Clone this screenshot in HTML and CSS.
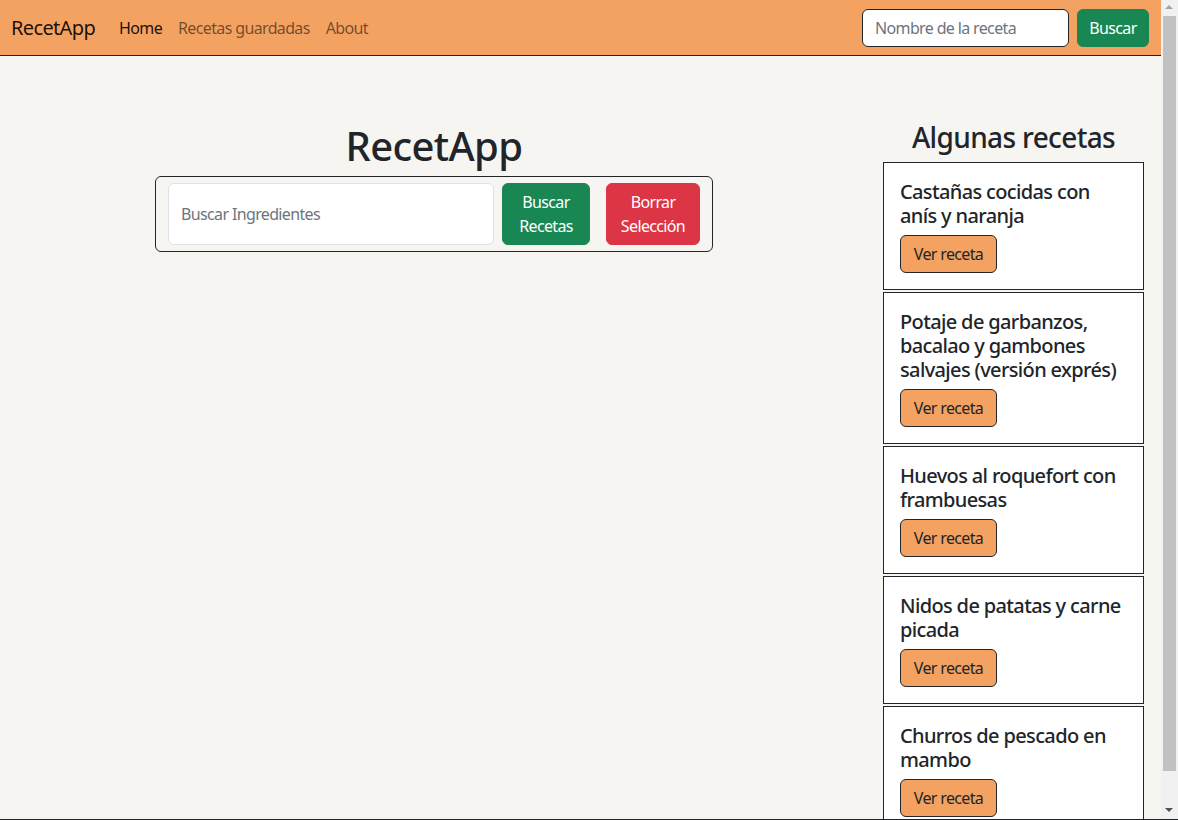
FILE: index.html
```html
<!DOCTYPE html>
<html lang="es">
<head>
<meta charset="utf-8">
<title>RecetApp</title>
<link rel="stylesheet" href="styles.css">
</head>
<body>
<nav class="navbar">
  <div class="nav-left">
    <a class="brand" href="#">RecetApp</a>
    <ul class="nav-links">
      <li><a class="nav-link active" href="#">Home</a></li>
      <li><a class="nav-link" href="#">Recetas guardadas</a></li>
      <li><a class="nav-link" href="#">About</a></li>
    </ul>
  </div>
  <form class="nav-search">
    <input class="nav-input" type="text" placeholder="Nombre de la receta">
    <button class="btn btn-green nav-btn" type="button">Buscar</button>
  </form>
</nav>

<main class="layout">
  <section class="main-col">
    <h1 class="title">RecetApp</h1>
    <div class="search-card">
      <input class="ing-input" type="text" placeholder="Buscar Ingredientes">
      <button class="btn btn-green btn-search" type="button">Buscar Recetas</button>
      <button class="btn btn-red btn-clear" type="button">Borrar Selección</button>
    </div>
  </section>

  <aside class="side-col">
    <h3 class="side-title">Algunas recetas</h3>
    <div class="recipe-card">
      <h5 class="recipe-name">Castañas cocidas con anís y naranja</h5>
      <button class="btn btn-orange" type="button">Ver receta</button>
    </div>
    <div class="recipe-card">
      <h5 class="recipe-name">Potaje de garbanzos, bacalao y gambones salvajes (versión exprés)</h5>
      <button class="btn btn-orange" type="button">Ver receta</button>
    </div>
    <div class="recipe-card">
      <h5 class="recipe-name">Huevos al roquefort con frambuesas</h5>
      <button class="btn btn-orange" type="button">Ver receta</button>
    </div>
    <div class="recipe-card">
      <h5 class="recipe-name">Nidos de patatas y carne picada</h5>
      <button class="btn btn-orange" type="button">Ver receta</button>
    </div>
    <div class="recipe-card">
      <h5 class="recipe-name">Churros de pescado en mambo</h5>
      <button class="btn btn-orange" type="button">Ver receta</button>
    </div>
  </aside>
</main>

<div class="scrollbar" aria-hidden="true">
  <span class="sb-arrow sb-up"></span>
  <span class="sb-thumb"></span>
  <span class="sb-arrow sb-down"></span>
</div>
<div class="bottom-line"></div>
</body>
</html>
```

FILE: styles.css
```css
* { box-sizing: border-box; }

html, body {
  margin: 0;
  padding: 0;
}

body {
  background: #f6f5f1;
  color: #212529;
  font-family: "Noto Sans", "Open Sans", sans-serif;
  font-size: 16px;
  line-height: 24px;
  letter-spacing: -0.04em;
  padding-right: 17px;
}

/* Navbar */
.navbar {
  display: flex;
  align-items: center;
  justify-content: space-between;
  height: 56px;
  padding: 0 12px 0 11px;
  background: #f4a261;
  border-bottom: 1px solid #212529;
}

.nav-left {
  display: flex;
  align-items: center;
}

.brand {
  font-size: 20px;
  line-height: 30px;
  color: rgba(0, 0, 0, 0.9);
  text-decoration: none;
  margin-right: 16px;
}

.nav-links {
  display: flex;
  list-style: none;
  margin: 0;
  padding: 0;
}

.nav-link {
  display: block;
  padding: 8px 8px;
  color: rgba(0, 0, 0, 0.55);
  text-decoration: none;
}

.nav-link.active {
  color: rgba(0, 0, 0, 0.9);
}

.nav-search {
  display: flex;
  gap: 8px;
  margin: 0;
}

.nav-input {
  width: 207px;
  height: 38px;
  padding: 6px 12px;
  border: 1px solid #212529;
  border-radius: 6px;
  background: #fff;
  font: inherit;
  letter-spacing: inherit;
  color: #212529;
}

.nav-input::placeholder,
.ing-input::placeholder {
  color: #6c757d;
}

.btn {
  font: inherit;
  letter-spacing: inherit;
  line-height: 24px;
  padding: 6px 12px;
  border: 1px solid transparent;
  border-radius: 6px;
  cursor: pointer;
  text-align: center;
}

.btn-green {
  background: #198754;
  border-color: #198754;
  color: #fff;
}

.btn-red {
  background: #dc3545;
  border-color: #dc3545;
  color: #fff;
}

.btn-orange {
  background: #f4a261;
  border-color: #212529;
  color: #212529;
  width: 97px;
  padding: 6px 0;
}

.nav-btn {
  height: 38px;
  width: 72px;
  padding: 6px 0;
}

/* Layout */
.layout {
  display: grid;
  grid-template-columns: 1fr 261px;
  column-gap: 15px;
  padding: 64px 17px 26px 0;
  align-items: start;
}

.main-col {
  display: flex;
  flex-direction: column;
  align-items: center;
}

.title {
  margin: 2px 0 6px;
  font-size: 40px;
  line-height: 48px;
  font-weight: 500;
  text-align: center;
}

.search-card {
  display: flex;
  align-items: stretch;
  width: 558px;
  padding: 6px 12px;
  border: 1px solid #212529;
  border-radius: 6px;
}

.ing-input {
  width: 326px;
  padding: 6px 12px;
  border: 1px solid #dee2e6;
  border-radius: 6px;
  background: #fff;
  font: inherit;
  letter-spacing: inherit;
  color: #212529;
}

.btn-search {
  width: 88px;
  margin-left: 8px;
  padding: 6px 8px;
}

.btn-clear {
  width: 94px;
  margin-left: 16px;
  padding: 6px 8px;
}

/* Side */
.side-title {
  margin: 0 0 8px;
  font-size: 28px;
  line-height: 34px;
  font-weight: 500;
  text-align: center;
}

.recipe-card {
  background: #fff;
  border: 1px solid #212529;
  padding: 16px;
  margin-bottom: 2px;
}

.recipe-name {
  margin: 0 0 8px;
  padding-top: 1px;
  margin-bottom: 7px;
  font-size: 20px;
  line-height: 24px;
  font-weight: 500;
}

/* Simulated browser scrollbar */
.scrollbar {
  position: fixed;
  top: 0;
  right: 0;
  bottom: 0;
  width: 17px;
  background: #f1f1f1;
}

.sb-thumb {
  position: absolute;
  top: 16px;
  bottom: 49px;
  left: 2px;
  right: 2px;
  background: #c1c1c1;
}

.sb-arrow {
  position: absolute;
  left: 4px;
  width: 0;
  height: 0;
  border-left: 4px solid transparent;
  border-right: 4px solid transparent;
}

.sb-up {
  top: 5px;
  border-bottom: 4px solid #a3a3a3;
}

.sb-down {
  bottom: 8px;
  border-top: 4px solid #505050;
}

.bottom-line {
  position: fixed;
  left: 0;
  right: 0;
  bottom: 0;
  height: 1px;
  background: #212529;
}
```
